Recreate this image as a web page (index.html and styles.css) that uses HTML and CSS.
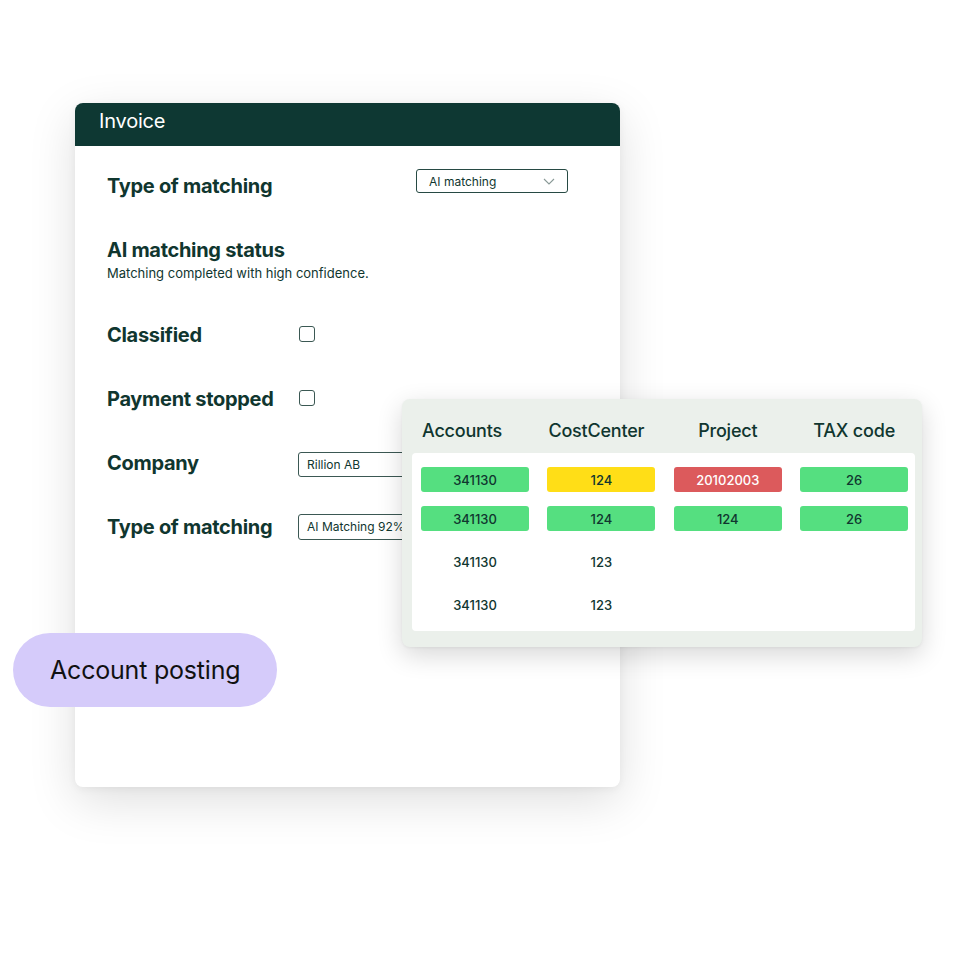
FILE: index.html
```html
<!DOCTYPE html>
<html lang="en">
<head>
<meta charset="utf-8">
<title>Invoice</title>
<link rel="stylesheet" href="styles.css">
</head>
<body>
<div class="stage">
  <section class="invoice">
    <header class="invoice-head">Invoice</header>
    <div class="invoice-body">
      <div class="row row-first">
        <span class="label">Type of matching</span>
        <div class="select">
          <span>AI matching</span>
          <svg class="chev" width="12" height="7" viewBox="0 0 12 7"><path d="M1 1l5 5 5-5" fill="none" stroke="#8a9a97" stroke-width="1.1"/></svg>
        </div>
      </div>
      <div class="status">
        <div class="label">AI matching status</div>
        <div class="sub">Matching completed with high confidence.</div>
      </div>
      <div class="row row-check">
        <span class="label label-col">Classified</span>
        <span class="check"></span>
      </div>
      <div class="row row-gap">
        <span class="label label-col">Payment stopped</span>
        <span class="check"></span>
      </div>
      <div class="row row-gap">
        <span class="label label-col">Company</span>
        <div class="input input-company">Rillion AB</div>
      </div>
      <div class="row row-gap">
        <span class="label label-col">Type of matching</span>
        <div class="input input-tall">AI Matching 92%</div>
      </div>
    </div>
  </section>

  <div class="table-card">
    <div class="thead">
      <span class="th th-left">Accounts</span>
      <span class="th th-left">CostCenter</span>
      <span class="th th-center">Project</span>
      <span class="th th-center">TAX code</span>
    </div>
    <div class="tbody">
      <div class="trow trow-1">
        <span class="cell green">341130</span>
        <span class="cell yellow">124</span>
        <span class="cell red">20102003</span>
        <span class="cell green">26</span>
      </div>
      <div class="trow trow-2">
        <span class="cell green">341130</span>
        <span class="cell green">124</span>
        <span class="cell green">124</span>
        <span class="cell green">26</span>
      </div>
      <div class="trow trow-plain trow-3">
        <span class="cell">341130</span>
        <span class="cell">123</span>
        <span class="cell"></span>
        <span class="cell"></span>
      </div>
      <div class="trow trow-plain">
        <span class="cell">341130</span>
        <span class="cell">123</span>
        <span class="cell"></span>
        <span class="cell"></span>
      </div>
    </div>
  </div>

  <div class="tag">Account posting</div>
</div>
</body>
</html>
```

FILE: styles.css
```css
* { box-sizing: border-box; }

html, body {
  margin: 0;
  padding: 0;
  background: #ffffff;
}

body {
  font-family: Inter, "Noto Sans", "Liberation Sans", sans-serif;
  color: #10362f;
}

.stage {
  position: relative;
  width: 960px;
  height: 960px;
  padding: 103px 0 0 75px;
  overflow: hidden;
}

.invoice {
  width: 545px;
  height: 684px;
  background: #ffffff;
  border-radius: 8px;
  box-shadow: 0 14px 48px rgba(0, 0, 0, 0.13), 0 2px 8px rgba(0, 0, 0, 0.05);
  overflow: hidden;
}

.invoice-head {
  height: 43px;
  background: #0e3833;
  color: #ffffff;
  font-size: 20px;
  font-weight: 400;
  line-height: 37px;
  padding-left: 24px;
  letter-spacing: -0.2px;
}

.invoice-body {
  padding: 20px 52px 0 32px;
}

.row {
  height: 40px;
  display: flex;
  align-items: center;
}

.row-check { margin-top: 33px; }
.row-gap { margin-top: 24px; }

.label {
  font-size: 20px;
  font-weight: 700;
  letter-spacing: -0.3px;
  color: #10362f;
  line-height: 24px;
}

.label-col {
  width: 191px;
  flex: none;
}

.select {
  margin-left: auto;
  align-self: flex-start;
  margin-top: 3px;
  width: 152px;
  height: 24px;
  border: 1px solid #274a44;
  border-radius: 3px;
  display: flex;
  align-items: center;
  justify-content: space-between;
  padding: 0 12px 0 12px;
  font-size: 12px;
  color: #10362f;
}

.chev { display: block; }

.status { margin-top: 32px; }

.sub {
  margin-top: 2px;
  font-size: 13px;
  line-height: 18px;
  color: #10362f;
}

.check {
  width: 16px;
  height: 16px;
  border: 1.5px solid #3b5853;
  border-radius: 3px;
  margin-left: 1px;
  margin-top: -3px;
}

.input {
  width: 150px;
  height: 25px;
  border: 1px solid #3b5853;
  border-radius: 3px;
  font-size: 12px;
  line-height: 23px;
  padding-left: 8px;
  color: #10362f;
}

.input-company { margin-top: 3px; }

.input-tall {
  height: 26px;
  line-height: 24px;
}

/* Table overlay */
.table-card {
  position: absolute;
  left: 402px;
  top: 399px;
  width: 520px;
  height: 248px;
  background: #ebf0eb;
  border-radius: 8px;
  box-shadow: 0 8px 26px rgba(0, 0, 0, 0.16), 0 1px 3px rgba(0, 0, 0, 0.05);
  padding: 0 7px 16px 10px;
}

.thead {
  display: grid;
  grid-template-columns: repeat(4, 108px);
  column-gap: 18.4px;
  padding: 20px 0 10px 9px;
}

.th {
  font-size: 18px;
  font-weight: 500;
  line-height: 24px;
  color: #10362f;
  letter-spacing: -0.2px;
  white-space: nowrap;
}

.th-left { text-align: left; padding-left: 1px; }
.th-center { text-align: center; }

.tbody {
  display: flow-root;
  background: #ffffff;
  border-radius: 4px;
  height: 178px;
  padding: 0 0 0 9px;
}

.trow {
  display: grid;
  grid-template-columns: repeat(4, 108px);
  column-gap: 18.4px;
  height: 25px;
  margin-top: 14px;
}

.trow-3 { margin-top: 9px; }
.trow-plain { height: 43px; }
.trow-plain + .trow-plain { margin-top: 0; }

.cell {
  display: flex;
  align-items: center;
  justify-content: center;
  font-size: 13px;
  font-weight: 500;
  color: #10362f;
  border-radius: 3px;
}

.green { background: #55df80; }
.yellow { background: #ffde17; }
.red { background: #dc5a5c; color: #ffffff; }

/* Floating tag */
.tag {
  position: absolute;
  left: 13px;
  top: 633px;
  width: 264px;
  height: 74px;
  border-radius: 37px;
  background: #d5cbfa;
  color: #111111;
  font-size: 25px;
  font-weight: 400;
  line-height: 74px;
  padding-left: 37px;
  letter-spacing: -0.2px;
}
```
